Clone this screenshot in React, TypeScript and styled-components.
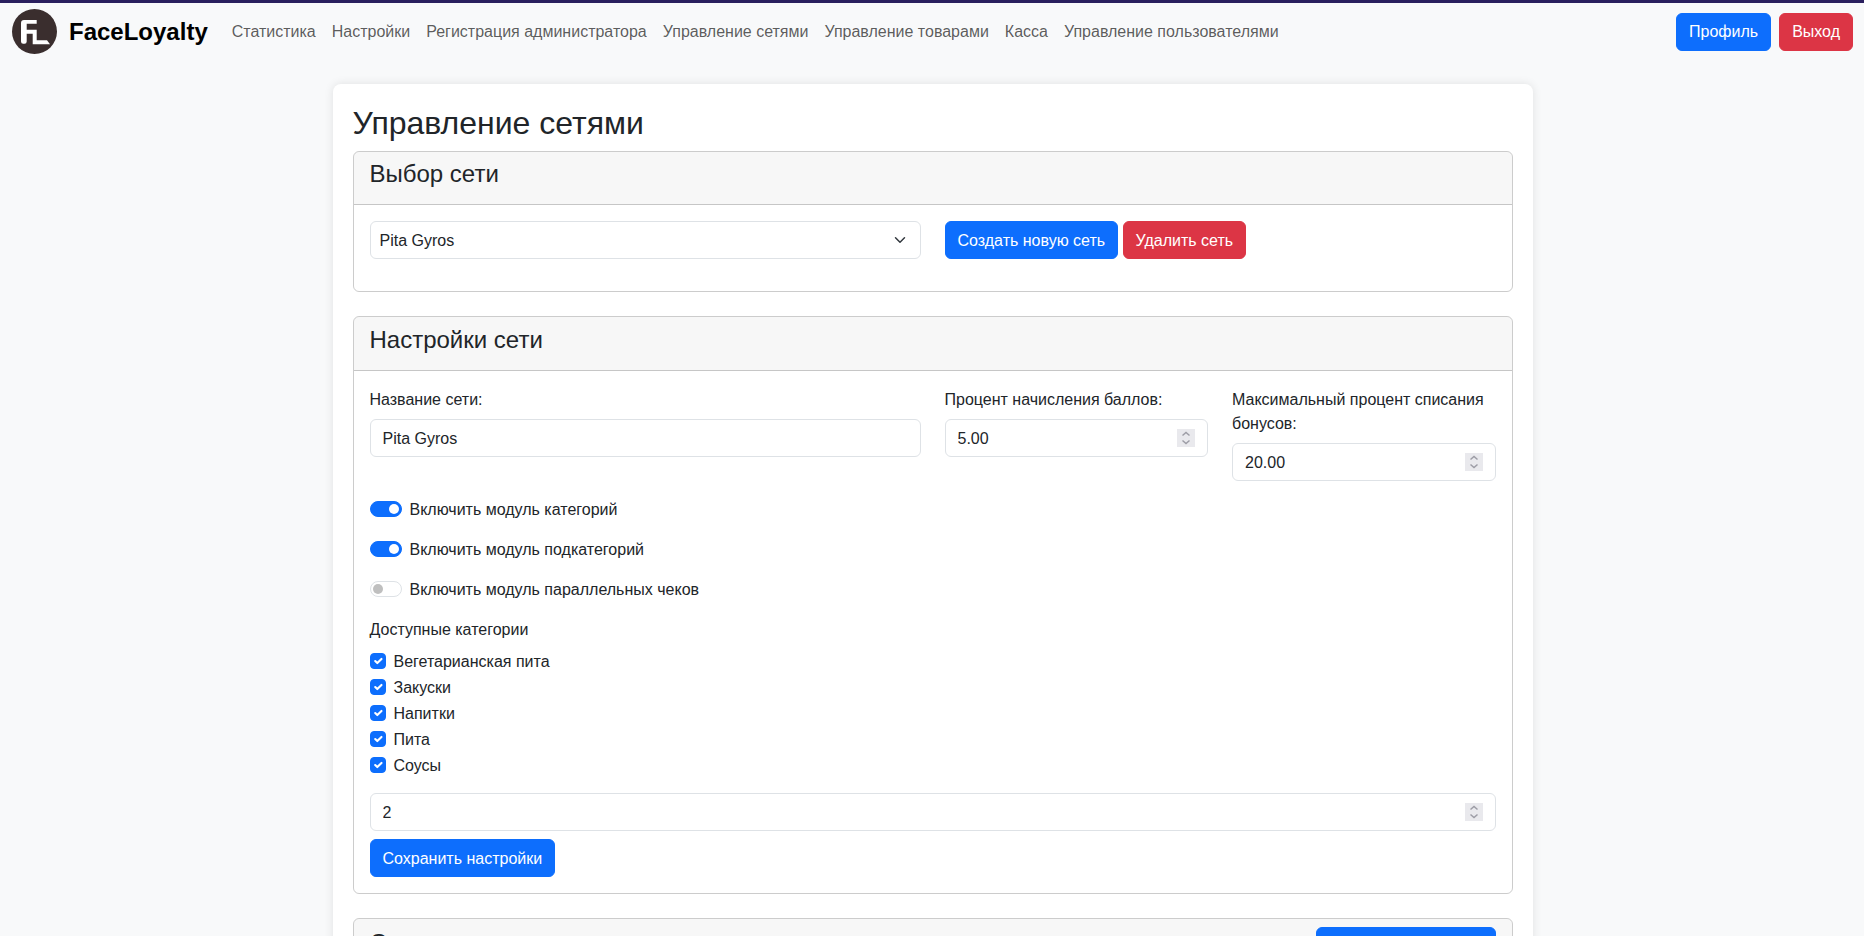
import React, { FC } from "react";
import styled, { createGlobalStyle } from "styled-components";

const navLinks = [
  "Статистика",
  "Настройки",
  "Регистрация администратора",
  "Управление сетями",
  "Управление товарами",
  "Касса",
  "Управление пользователями",
];

const categories = ["Вегетарианская пита", "Закуски", "Напитки", "Пита", "Соусы"];

const App: FC = () => {
  return (
    <>
      <GlobalStyle />
      <Navbar>
        <Brand href="#">
          <Logo viewBox="0 0 45 45" aria-hidden="true">
            <circle cx="22.5" cy="22.5" r="22.5" fill="#3a2e2e" />
            <path
              d="M12 11H24.700V14.700H14.700V20.700H24.700V31.300H35L38 35.300H20.700V24.700H14.700V32.500a2.200 2.200 0 0 1-2.200 2.200H11.200a2.200 2.200 0 0 1-2.200-2.200V14a3 3 0 0 1 3-3z"
              fill="#fff"
            />
          </Logo>
          FaceLoyalty
        </Brand>
        <NavList>
          {navLinks.map((link) => (
            <NavLink key={link} href="#">
              {link}
            </NavLink>
          ))}
        </NavList>
        <NavActions>
          <Button $variant="primary">Профиль</Button>
          <Button $variant="danger">Выход</Button>
        </NavActions>
      </Navbar>

      <Page>
        <PageTitle>Управление сетями</PageTitle>

        <Card>
          <CardHeader>
            <CardTitle>Выбор сети</CardTitle>
          </CardHeader>
          <CardBody>
            <Row>
              <Col $span={6}>
                <Select defaultValue="Pita Gyros">
                  <option>Pita Gyros</option>
                </Select>
              </Col>
              <Col $span={6}>
                <ButtonRow>
                  <BodyButton $variant="primary">Создать новую сеть</BodyButton>
                  <BodyButton $variant="danger">Удалить сеть</BodyButton>
                </ButtonRow>
              </Col>
            </Row>
          </CardBody>
        </Card>

        <Card>
          <CardHeader>
            <LowerTitle>Настройки сети</LowerTitle>
          </CardHeader>
          <SettingsBody>
            <Row>
              <Col $span={6}>
                <Label>Название сети:</Label>
                <Input type="text" defaultValue="Pita Gyros" />
              </Col>
              <Col $span={3}>
                <Label>Процент начисления баллов:</Label>
                <Input type="number" defaultValue="5.00" step="0.01" />
              </Col>
              <Col $span={3}>
                <Label>Максимальный процент списания бонусов:</Label>
                <Input type="number" defaultValue="20.00" step="0.01" />
              </Col>
            </Row>

            <SwitchRow>
              <Switch type="checkbox" defaultChecked />
              Включить модуль категорий
            </SwitchRow>
            <SwitchRow>
              <Switch type="checkbox" defaultChecked />
              Включить модуль подкатегорий
            </SwitchRow>
            <SwitchRow>
              <Switch type="checkbox" />
              Включить модуль параллельных чеков
            </SwitchRow>

            <Label>Доступные категории</Label>
            <CheckList>
              {categories.map((name) => (
                <CheckRow key={name}>
                  <Checkbox type="checkbox" defaultChecked />
                  {name}
                </CheckRow>
              ))}
            </CheckList>

            <WideInput type="number" defaultValue="2" />
            <BodyButton $variant="primary">Сохранить настройки</BodyButton>
          </SettingsBody>
        </Card>

        <Card>
          <SplitHeader>
            <LowerTitle>Список товаров</LowerTitle>
            <HeaderButton $variant="primary">Добавить товар</HeaderButton>
          </SplitHeader>
          <CardBody />
        </Card>
      </Page>
    </>
  );
};

export default App;

const GlobalStyle = createGlobalStyle`
  * {
    box-sizing: border-box;
  }

  body {
    margin: 0;
    background-color: #f8f9fa;
    color: #212529;
    font-family: "Liberation Sans", Arial, sans-serif;
    font-size: 16px;
    line-height: 1.5;
  }
`;

const Navbar = styled.nav`
  display: flex;
  align-items: center;
  height: 60.3px;
  padding: 0 11px 0 12px;
  border-top: 3px solid #2a1f5e;
  background-color: #f8f9fa;
`;

const Brand = styled.a`
  display: flex;
  align-items: center;
  gap: 12px;
  margin-right: 16px;
  color: #000;
  font-size: 24px;
  font-weight: 700;
  text-decoration: none;
`;

const Logo = styled.svg`
  width: 45px;
  height: 45px;
`;

const NavList = styled.div`
  display: flex;
  flex: 1;
`;

const NavLink = styled.a`
  padding: 8px;
  color: rgba(0, 0, 0, 0.65);
  text-decoration: none;
`;

const NavActions = styled.div`
  display: flex;
  gap: 8px;
`;

const Button = styled.button<{ $variant: "primary" | "danger" }>`
  height: 38px;
  padding: 6px 12px;
  border: 1px solid ${(p) => (p.$variant === "primary" ? "#0d6efd" : "#dc3545")};
  border-radius: 6px;
  background-color: ${(p) => (p.$variant === "primary" ? "#0d6efd" : "#dc3545")};
  color: #fff;
  font: inherit;
`;

const BodyButton = styled(Button)`
  padding: 7px 12px 5px;
`;

const HeaderButton = styled(Button)`
  width: 180px;
`;

const Page = styled.main`
  width: 1200px;
  margin: 24px 0 0 332.5px;
  padding: 20px;
  border-radius: 8px;
  background-color: #fff;
  box-shadow: 0 0 10px rgba(0, 0, 0, 0.1);
`;

const PageTitle = styled.h2`
  margin: 0 0 8px;
  font-size: 32px;
  font-weight: 500;
  line-height: 1.2;
`;

const Card = styled.section`
  margin-bottom: 24px;
  border: 1px solid rgba(0, 0, 0, 0.2);
  border-radius: 6px;
`;

const CardHeader = styled.div`
  padding: 8px 16px;
  border-bottom: 1px solid rgba(0, 0, 0, 0.2);
  border-radius: 5px 5px 0 0;
  background-color: rgba(0, 0, 0, 0.03);
`;

const SplitHeader = styled(CardHeader)`
  display: flex;
  align-items: center;
  justify-content: space-between;
`;

const CardTitle = styled.h4`
  margin: 0 0 8px;
  font-size: 24px;
  font-weight: 500;
  line-height: 1.2;
`;

const LowerTitle = styled(CardTitle)`
  margin-bottom: 7px;
  padding-top: 1px;
`;

const CardBody = styled.div`
  padding: 16px;
`;

const SettingsBody = styled(CardBody)`
  display: flex;
  flex-direction: column;
  align-items: flex-start;
`;

const Row = styled.div`
  display: flex;
  align-self: stretch;
  gap: 24px;
`;

const Col = styled.div<{ $span: number }>`
  flex: 0 0 calc((100% - 24px * 11) / 12 * ${(p) => p.$span} + 24px * ${(p) => p.$span - 1});
  min-width: 0;
  margin-bottom: 16px;
`;

const ButtonRow = styled.div`
  display: flex;
  gap: 4.45px;
`;

const Label = styled.label`
  display: block;
  margin-bottom: 7px;
  padding-top: 1px;
`;

const controlBase = `
  display: block;
  width: 100%;
  height: 38px;
  border: 1px solid #dee2e6;
  border-radius: 6px;
  background-color: #fff;
  color: #212529;
  font: inherit;
  outline: none;
`;

const Input = styled.input`
  ${controlBase}
  padding: 7px 12px 5px;

  &::-webkit-inner-spin-button {
    appearance: none;
    align-self: center;
    width: 18px;
    height: 18px;
    margin: -2px 0 0;
    opacity: 1;
    background: #e9e9ed url("data:image/svg+xml,%3csvg xmlns='http://www.w3.org/2000/svg' viewBox='0 0 18 18'%3e%3cpath fill='none' stroke='%239d9da6' stroke-width='1.5' d='M5.500 6.500 9 3.500l3.500 3M5.500 11.500 9 14.500l3.500-3'/%3e%3c/svg%3e") center / 18px 18px no-repeat;
  }
`;

const WideInput = styled(Input)`
  margin-bottom: 8px;
`;

const Select = styled.select`
  ${controlBase}
  padding: 7px 36px 5px 9px;
  appearance: none;
  background-image: url("data:image/svg+xml,%3csvg xmlns='http://www.w3.org/2000/svg' viewBox='0 0 16 16'%3e%3cpath fill='none' stroke='%23343a40' stroke-linecap='round' stroke-linejoin='round' stroke-width='2' d='m2 5 6 6 6-6'/%3e%3c/svg%3e");
  background-position: right 12px center;
  background-repeat: no-repeat;
  background-size: 16px 12px;
`;

const SwitchRow = styled.label`
  display: flex;
  align-items: center;
  gap: 8px;
  height: 24px;
  margin-bottom: 16px;
  padding-top: 2px;
`;

const Switch = styled.input`
  position: relative;
  flex: none;
  width: 32px;
  height: 16px;
  margin: -2px 0 0;
  border: 1px solid #dee2e6;
  border-radius: 16px;
  background-color: #fff;
  appearance: none;

  &::after {
    content: "";
    position: absolute;
    top: 2px;
    left: 2px;
    width: 10px;
    height: 10px;
    border-radius: 50%;
    background-color: #bfbfbf;
  }

  &:checked {
    border-color: #0d6efd;
    background-color: #0d6efd;
  }

  &:checked::after {
    left: 18px;
    background-color: #fff;
  }
`;

const CheckList = styled.div`
  display: flex;
  flex-direction: column;
  gap: 2px;
  margin-bottom: 16px;
`;

const CheckRow = styled.label`
  display: flex;
  align-items: center;
  gap: 8px;
  height: 24px;
  padding-top: 2px;
`;

const Checkbox = styled.input`
  flex: none;
  width: 16px;
  height: 16px;
  margin: -2px 0 0;
  border: 1px solid #0d6efd;
  border-radius: 4px;
  background-color: #0d6efd;
  appearance: none;
  background-image: url("data:image/svg+xml,%3csvg xmlns='http://www.w3.org/2000/svg' viewBox='0 0 20 20'%3e%3cpath fill='none' stroke='%23fff' stroke-linecap='round' stroke-linejoin='round' stroke-width='3' d='m6 10 3 3 6-6'/%3e%3c/svg%3e");
  background-position: center;
  background-size: 100% 100%;
`;
